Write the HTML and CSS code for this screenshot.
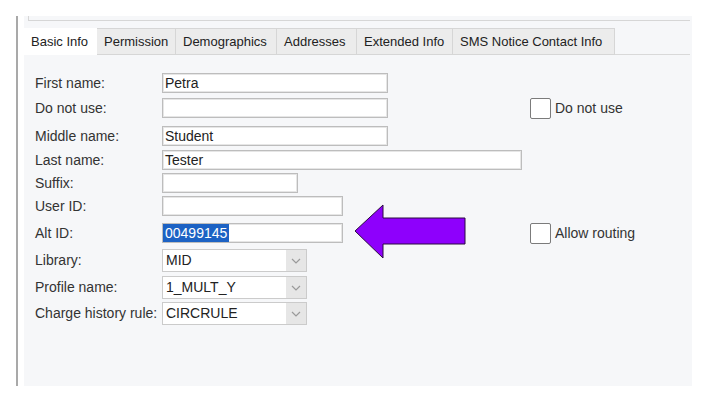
FILE: index.html
```html
<!DOCTYPE html>
<html>
<head>
<meta charset="utf-8">
<link rel="stylesheet" href="styles.css">
</head>
<body>
<div class="frame">
  <div class="panel">
    <div class="topbox"></div>
    <div class="tabs">
      <div class="tab active">Basic Info</div>
      <div class="tab t-perm">Permission</div>
      <div class="tab t-demo">Demographics</div>
      <div class="tab t-addr">Addresses</div>
      <div class="tab t-ext">Extended Info</div>
      <div class="tab t-sms">SMS Notice Contact Info</div>
      <div class="tab-fill"></div>
    </div>
    <div class="form">
      <div class="lbl">First name:</div>
      <div class="field w226"><span>Petra</span></div>

      <div class="lbl">Do not use:</div>
      <div class="field w226"></div>
      <label class="check"><span class="box"></span><span>Do not use</span></label>

      <div class="lbl">Middle name:</div>
      <div class="field w226"><span>Student</span></div>

      <div class="lbl">Last name:</div>
      <div class="field w360"><span>Tester</span></div>

      <div class="lbl">Suffix:</div>
      <div class="field w136"></div>

      <div class="lbl">User ID:</div>
      <div class="field w181"></div>

      <div class="lbl">Alt ID:</div>
      <div class="field w181 nopad"><span class="sel">00499145</span></div>
      <label class="check"><span class="box"></span><span>Allow routing</span></label>

      <div class="lbl lbl-sel">Library:</div>
      <div class="select"><span class="val">MID</span><span class="arrow"><svg width="10" height="6" viewBox="0 0 10 6"><path d="M1 1 L5 5 L9 1" fill="none" stroke="#9a9a9a" stroke-width="1.2"/></svg></span></div>

      <div class="lbl lbl-sel">Profile name:</div>
      <div class="select"><span class="val">1_MULT_Y</span><span class="arrow"><svg width="10" height="6" viewBox="0 0 10 6"><path d="M1 1 L5 5 L9 1" fill="none" stroke="#9a9a9a" stroke-width="1.2"/></svg></span></div>

      <div class="lbl lbl-sel">Charge history rule:</div>
      <div class="select"><span class="val">CIRCRULE</span><span class="arrow"><svg width="10" height="6" viewBox="0 0 10 6"><path d="M1 1 L5 5 L9 1" fill="none" stroke="#9a9a9a" stroke-width="1.2"/></svg></span></div>
    </div>
  </div>
</div>
<svg class="pointer" width="116" height="58" viewBox="353 203 116 58">
  <polygon points="355,231 383,205 383,218 465,218 465,244 383,244 383,258" fill="#8e00fc" stroke="#2a0a40" stroke-width="1"/>
</svg>
</body>
</html>
```

FILE: styles.css
```css
html, body {
  margin: 0;
  padding: 0;
  background: #ffffff;
}
body {
  font-family: "Liberation Sans", Arial, sans-serif;
  color: #333333;
  position: relative;
  width: 706px;
  height: 402px;
  overflow: hidden;
}
.frame {
  margin: 16px 0 0 16px;
  border-left: 2px solid #a9a9a9;
  padding-left: 6px;
  height: 370px;
  width: 668px;
}
.panel {
  width: 668px;
  height: 370px;
  background: #f6f7f9;
}
.topbox {
  margin-left: 4px;
  width: 661px;
  height: 4px;
  border-left: 1px solid #d6d6d6;
  border-bottom: 1px solid #d6d6d6;
}
.tabs {
  margin-top: 7px;
  display: flex;
  width: 666px;
  height: 27px;
}
.tab {
  box-sizing: border-box;
  height: 27px;
  padding: 0 7px;
  font-size: 13px;
  line-height: 25px;
  color: #222222;
  background: #ececec;
  border: 1px solid #d6d6d6;
  border-left: none;
  white-space: nowrap;
}
.tab.active {
  width: 73px;
  background: #ffffff;
  border: none;
  padding: 1px 0 0 7px;
}
.t-perm { width: 79px; }
.t-demo { width: 101px; }
.t-addr { width: 80px; }
.t-ext { width: 96px; }
.t-sms { width: 162px; }
.tab-fill {
  flex: 1;
  border-bottom: 1px solid #d9d9d9;
}
.form {
  margin-top: 18px;
  padding-left: 11px;
  display: grid;
  grid-template-columns: 127px 368px auto;
  grid-template-rows: 25px 28px 24px 23px 23px 27px 26px 27px 26px 23px;
  align-items: start;
}
.lbl {
  grid-column: 1;
  font-size: 14px;
  line-height: 20px;
  color: #333333;
  white-space: nowrap;
}
.lbl-sel {
  line-height: 23px;
}
.field {
  grid-column: 2;
  box-sizing: border-box;
  height: 20px;
  background: #ffffff;
  border: 1px solid #bdbdbd;
  box-shadow: inset 0 0 0 1px #e6e6e6;
  padding: 0 2px;
  font-size: 14px;
  line-height: 18px;
  color: #222222;
  display: flex;
}
.field.nopad {
  padding: 0;
}
.w226 { width: 226px; }
.w360 { width: 360px; }
.w136 { width: 136px; }
.w181 { width: 181px; }
.sel {
  background: #1c62c4;
  color: #ffffff;
  padding: 0 2px 0 2px;
}
.check {
  grid-column: 3;
  display: flex;
  align-items: center;
  height: 20px;
  font-size: 14px;
  color: #333333;
}
.box {
  box-sizing: border-box;
  width: 21px;
  height: 21px;
  border: 1px solid #7b7b7b;
  border-radius: 2px;
  background: #ffffff;
  margin-right: 4px;
}
.select {
  grid-column: 2;
  box-sizing: border-box;
  width: 145px;
  height: 23px;
  border: 1px solid #cbcbcb;
  background: #ffffff;
  display: flex;
  font-size: 14px;
  color: #222222;
}
.select .val {
  flex: 1;
  padding-left: 3px;
  line-height: 21px;
}
.select .arrow {
  width: 20px;
  background: #e6e6e6;
  display: flex;
  align-items: center;
  justify-content: center;
}
.pointer {
  position: absolute;
  left: 353px;
  top: 203px;
}
```
